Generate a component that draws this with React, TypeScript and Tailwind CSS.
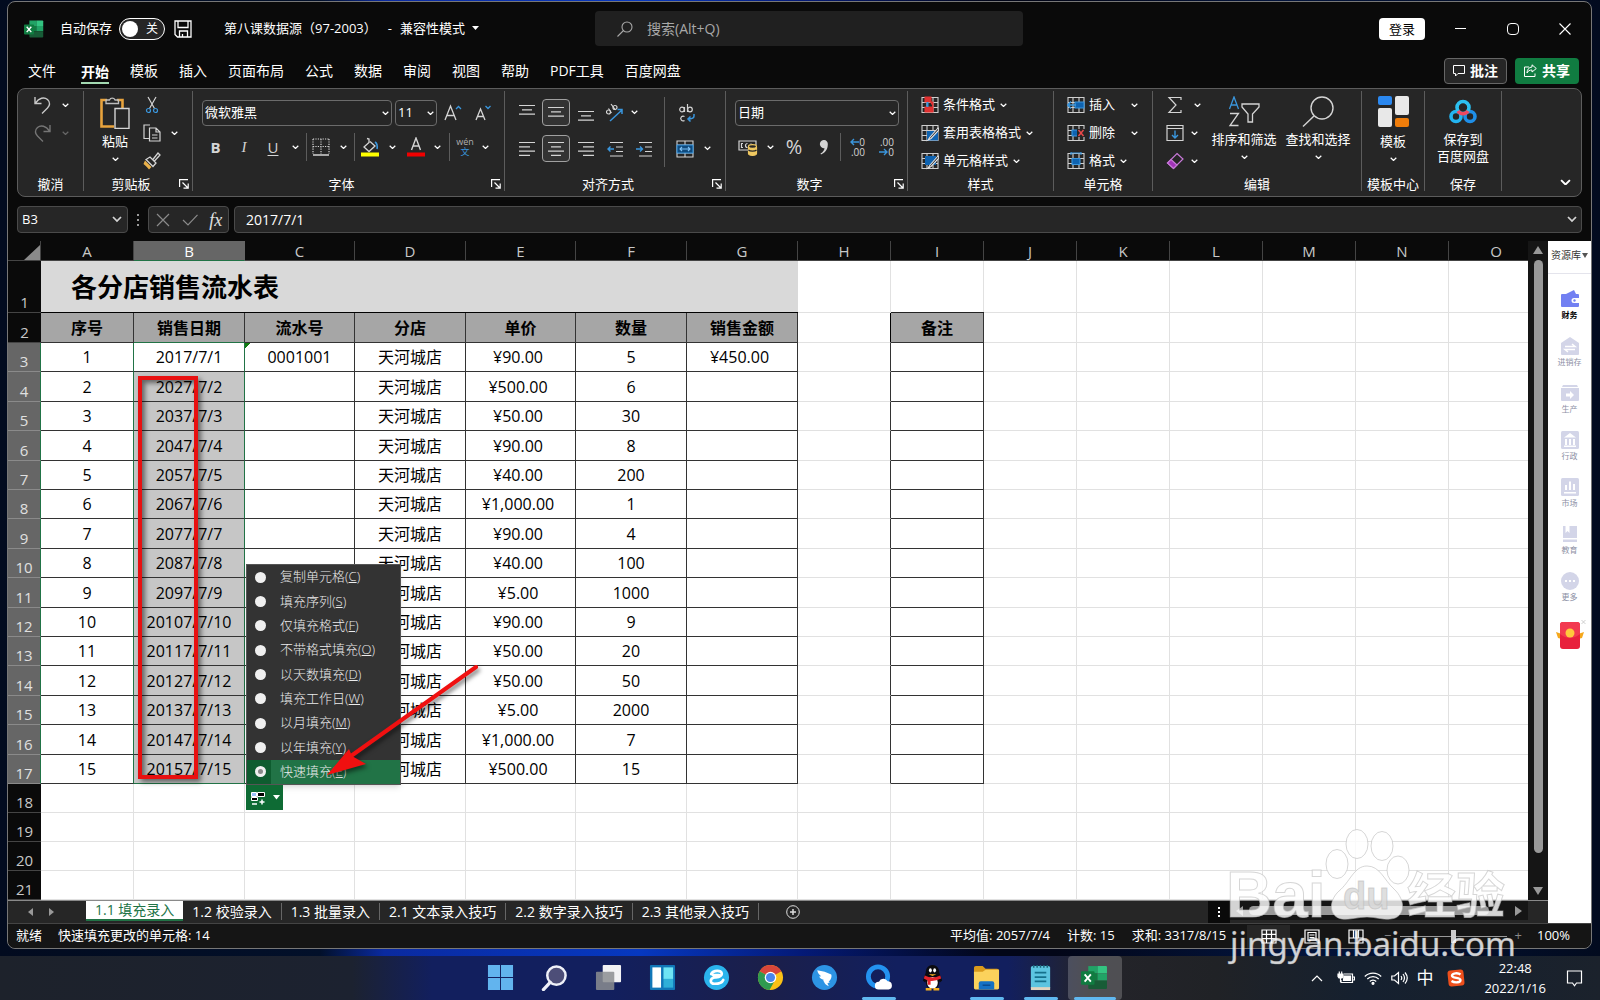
import type { ReactNode } from 'react';

const columns = ['A', 'B', 'C', 'D', 'E', 'F', 'G', 'H', 'I', 'J', 'K', 'L', 'M', 'N', 'O'];
const columnWidths = [
  'w-[93px]', 'w-[111px]', 'w-[110px]', 'w-[111px]', 'w-[110px]', 'w-[111px]', 'w-[111px]',
  'w-[93px]', 'w-[93px]', 'w-[93px]', 'w-[93px]', 'w-[93px]', 'w-[93px]', 'w-[93px]', '',
];
const rowHeights = ['h-[29px]', 'h-[30px]', 'h-[29px]', 'h-[30px]', 'h-[29px]'];

const sales = [
  ['1', '2017/7/1', '¥90.00', '5'],
  ['2', '2027/7/2', '¥500.00', '6'],
  ['3', '2037/7/3', '¥50.00', '30'],
  ['4', '2047/7/4', '¥90.00', '8'],
  ['5', '2057/7/5', '¥40.00', '200'],
  ['6', '2067/7/6', '¥1,000.00', '1'],
  ['7', '2077/7/7', '¥90.00', '4'],
  ['8', '2087/7/8', '¥40.00', '100'],
  ['9', '2097/7/9', '¥5.00', '1000'],
  ['10', '20107/7/10', '¥90.00', '9'],
  ['11', '20117/7/11', '¥50.00', '20'],
  ['12', '20127/7/12', '¥50.00', '50'],
  ['13', '20137/7/13', '¥5.00', '2000'],
  ['14', '20147/7/14', '¥1,000.00', '7'],
  ['15', '20157/7/15', '¥500.00', '15'],
];

const menuTabs = ['模板', '插入', '页面布局', '公式', '数据', '审阅', '视图', '帮助', 'PDF工具', '百度网盘'];
const sheetTabs = ['1.2 校验录入', '1.3 批量录入', '2.1 文本录入技巧', '2.2 数字录入技巧', '2.3 其他录入技巧'];

const fillOptions = [
  ['复制单元格', 'C'],
  ['填充序列', 'S'],
  ['仅填充格式', 'F'],
  ['不带格式填充', 'O'],
  ['以天数填充', 'D'],
  ['填充工作日', 'W'],
  ['以月填充', 'M'],
  ['以年填充', 'Y'],
  ['快速填充', 'E'],
];

/* ---------- shared bits ---------- */

const Chevron = ({ className = 'w-[7px] text-white' }: { className?: string }) => (
  <svg viewBox="0 0 8 5" className={`${className} shrink-0`} fill="none" stroke="currentColor" strokeWidth="1.4">
    <path d="M.8.8 4 4 7.200.8" />
  </svg>
);

const IconButton = ({ label, className, children }: { label: string; className: string; children: ReactNode }) => (
  <button type="button" aria-label={label} className={`${className} flex shrink-0 items-center justify-center`}>
    {children}
  </button>
);

const Divider = ({ className = 'h-7' }: { className?: string }) => (
  <span className={`${className} w-px shrink-0 bg-[#5c5c5c]`} />
);

const Lines = ({ rows }: { rows: [number, number][] }) => (
  <svg viewBox="0 0 16 16" className="h-4 w-4" stroke="#d4d4d4" strokeWidth="1.2">
    {rows.map(([from, to], i) => (
      <path key={i} d={`M${from} ${1.500 + i * 4.300}H${to}`} />
    ))}
  </svg>
);

const Group = ({ title, width, launcher, children }: { title: string; width: string; launcher?: boolean; children: ReactNode }) => (
  <section className={`${width} mt-[2px] mb-[5px] flex shrink-0 flex-col border-r border-[#5c5c5c]`}>
    <div className="flex min-h-0 flex-1">{children}</div>
    <div className="flex h-[14px] items-center">
      <h2 className="flex-1 text-center text-[13px] leading-[14px] whitespace-nowrap">{title}</h2>
      {launcher && (
        <IconButton label={`${title}设置`} className="mr-[2px] h-3 w-3">
          <svg viewBox="0 0 10 10" className="h-[10px] w-[10px]" fill="none" stroke="#fff" strokeWidth="1.2">
            <path d="M.6 8V.6H9M3.500 3.500 9 9M9.200 4.500v4.700H4.500" />
          </svg>
        </IconButton>
      )}
    </div>
  </section>
);

const ExcelIcon = ({ className }: { className: string }) => (
  <svg viewBox="0 0 26 26" className={className}>
    <path d="M7 2h9v7H7z" fill="#21a366" />
    <path d="M16 2h8a1 1 0 0 1 1 1v6h-9z" fill="#33c481" />
    <path d="M7 9h9v7H7z" fill="#107c41" />
    <path d="M16 9h9v7h-9z" fill="#21a366" />
    <path d="M7 16h18v7a1 1 0 0 1-1 1H8a1 1 0 0 1-1-1z" fill="#185c37" />
    <rect x="0" y="7" width="13" height="13" rx="1" fill="#107c41" />
    <path d="m3.500 10 6 7M9.500 10l-6 7" stroke="#fff" strokeWidth="1.800" />
  </svg>
);

/* ---------- title bar and tabs ---------- */

const TitleBar = () => (
  <header className="flex h-[53px] shrink-0 items-center text-[13px] text-white">
    <div className="flex w-[587px] items-center">
      <ExcelIcon className="ml-[16px] h-5 w-5" />
      <span className="ml-[16px]">自动保存</span>
      <button
        type="button"
        role="switch"
        aria-checked="false"
        aria-label="自动保存"
        className="ml-[7px] flex h-[22px] w-[46px] items-center justify-between rounded-full border border-white bg-[#262626] pr-[6px] pl-[2px] text-[12px]"
      >
        <span className="h-4 w-4 rounded-full bg-white" />关
      </button>
      <IconButton label="保存" className="ml-2 h-5 w-5">
        <svg viewBox="0 0 18 18" className="h-[18px] w-[18px]" fill="none" stroke="#fff" strokeWidth="1.300">
          <path d="M1 1h16v16H3.500L1 14.500zM4 1v6.500h10V1M5.500 17v-6h8v6M8.500 17v-3" />
        </svg>
      </IconButton>
      <h1 className="ml-[31px] whitespace-pre">第八课数据源（97-2003）</h1>
      <span className="ml-[11px]">-</span>
      <button type="button" className="ml-2 flex items-center gap-[7px]">
        兼容性模式
        <svg viewBox="0 0 8 5" className="w-[7px]" fill="#fff"><path d="M0 0h8L4 4.500z" /></svg>
      </button>
    </div>
    <label className="flex h-[35px] w-[428px] items-center gap-[14px] rounded bg-[#202020] pl-[22px] text-[14px]">
      <svg viewBox="0 0 16 16" className="h-4 w-4" fill="none" stroke="#a8a8a8" strokeWidth="1.100">
        <circle cx="10" cy="6" r="5" /><path d="m6.500 9.500-6 6" />
      </svg>
      <input type="text" aria-label="搜索" placeholder="搜索(Alt+Q)" className="flex-1 bg-transparent outline-none placeholder:text-[#a8a8a8]" />
    </label>
    <div className="flex flex-1 items-center justify-end">
      <button type="button" className="mr-[27px] h-[22px] w-[46px] rounded-sm bg-white text-[13px] leading-[22px] text-black">登录</button>
      <IconButton label="最小化" className="mr-[37px] h-4 w-4">
        <span className="h-px w-[11px] bg-white" />
      </IconButton>
      <IconButton label="最大化" className="mr-[36px] h-4 w-4">
        <span className="h-3 w-3 rounded-sm border border-white" />
      </IconButton>
      <IconButton label="关闭" className="mr-[18px] h-4 w-4">
        <svg viewBox="0 0 12 12" className="h-3 w-3" stroke="#fff" strokeWidth="1.100"><path d="m.5.5 11 11M11.500.5l-11 11" /></svg>
      </IconButton>
    </div>
  </header>
);

const MenuBar = () => (
  <nav className="flex h-[33px] shrink-0 items-center pb-[2px] text-[14px] text-white">
    <button type="button" className="mr-[25px] ml-5">文件</button>
    <button type="button" className="mt-[4px] mr-[21px] border-b-2 border-[#a3d9b1] font-bold">开始</button>
    <div className="flex gap-[21px]">
      {menuTabs.map((tab) => (
        <button type="button" key={tab} className="whitespace-nowrap">{tab}</button>
      ))}
    </div>
    <div className="flex flex-1 justify-end gap-[8px] pr-[12px] font-bold">
      <button type="button" className="flex h-[26px] w-[63px] items-center justify-center gap-[5px] rounded border border-[#666] bg-[#262626]">
        <svg viewBox="0 0 12 12" className="h-3 w-3" fill="none" stroke="#fff"><path d="M.5.5h11v8H5l-2.500 2.500V8.500h-2z" /></svg>
        批注
      </button>
      <button type="button" className="flex h-[26px] w-[64px] items-center justify-center gap-[5px] rounded bg-[#107c41]">
        <svg viewBox="0 0 13 13" className="h-[13px] w-[13px]" fill="none" stroke="#fff">
          <path d="M5 3H.5v9.500H11V9.500M8 .8 12.300 4.500 8 8V6C5.500 6 4 7 3 9c0-3.500 2-5.800 5-6z" />
        </svg>
        共享
      </button>
    </div>
  </nav>
);

/* ---------- ribbon ---------- */

const ClipboardGroup = () => (
  <Group title="剪贴板" width="w-[109px]" launcher>
    <button type="button" className="ml-[12px] flex w-[38px] flex-col items-center pt-[5px] text-[13px] leading-4">
      <svg viewBox="0 0 30 33" className="h-[33px] w-[30px] shrink-0" fill="none">
        <path d="M7 4H1.500v26.500H14M17 4h5.500v8" stroke="#e8a33d" strokeWidth="2.600" />
        <path d="M6 7.500V4h3.500a3 3 0 0 1 5.500 0h3.500v3.500z" stroke="#bdbdbd" strokeWidth="1.300" />
        <path d="M15 12.500h14v20H15z" stroke="#d4d4d4" strokeWidth="1.400" fill="#262626" />
      </svg>
      <span className="mt-[4px] mb-[8px]">粘贴</span>
      <Chevron />
    </button>
    <div className="ml-[9px] flex flex-col">
      <IconButton label="剪切" className="h-[28px] w-[18px]">
        <svg viewBox="0 0 14 18" className="h-[18px] w-[14px]" fill="none" strokeWidth="1.200">
          <path d="m3 1 6.500 11.500M11 1 4.500 12.500" stroke="#d4d4d4" />
          <circle cx="3.500" cy="14.500" r="2" stroke="#3a96dd" /><circle cx="10.500" cy="14.500" r="2" stroke="#3a96dd" />
        </svg>
      </IconButton>
      <button type="button" aria-label="复制" className="flex h-[28px] items-center gap-[10px]">
        <svg viewBox="0 0 18 18" className="h-[18px] w-[18px]" fill="none" stroke="#d4d4d4" strokeWidth="1.200">
          <path d="M6 14.500H1V1h6M6.500 4h6.500l4 4v9H6.500zM13 4v4h4M9 11h5.500M9 14h5.500" />
        </svg>
        <Chevron />
      </button>
      <IconButton label="格式刷" className="h-[28px] w-[18px]">
        <svg viewBox="0 0 18 18" className="h-[18px] w-[18px]" fill="none">
          <path d="M2 8.500 8.500 15 6 17.500C4 15 2 13 .5 12z" fill="#e8b04a" />
          <path d="m3 7.500 7 7 3-3.500-6-6zM9.500 8 15 1l2 2-6 6.500" stroke="#d4d4d4" strokeWidth="1.300" />
        </svg>
      </IconButton>
    </div>
  </Group>
);

const FontGroup = () => (
  <Group title="字体" width="w-[312px]" launcher>
    <div className="flex flex-col pl-[9px]">
      <div className="mt-[9px] flex items-center">
        <div className="grid items-center">
          <select aria-label="字体" className="col-start-1 row-start-1 h-[26px] w-[190px] appearance-none rounded border border-[#6b6b6b] bg-[#262626] pl-[2px] text-[13px]">
            <option>微软雅黑</option>
          </select>
          <Chevron className="pointer-events-none col-start-1 row-start-1 mr-[3px] w-[7px] justify-self-end" />
        </div>
        <div className="ml-[3px] grid items-center">
          <select aria-label="字号" className="col-start-1 row-start-1 h-[26px] w-[42px] appearance-none rounded border border-[#6b6b6b] bg-[#262626] pl-[2px] text-[13px]">
            <option>11</option>
          </select>
          <Chevron className="pointer-events-none col-start-1 row-start-1 mr-[3px] w-[7px] justify-self-end" />
        </div>
        <IconButton label="增大字号" className="h-6 w-[31px]">
          <svg viewBox="0 0 18 18" className="h-[18px] w-[18px]" fill="none" strokeWidth="1.300">
            <path d="M1 16 6.500 2 12 16M3 11.500h7" stroke="#d4d4d4" /><path d="m12 5 2.500-2.500L17 5" stroke="#3a96dd" />
          </svg>
        </IconButton>
        <IconButton label="减小字号" className="h-6 w-[29px]">
          <svg viewBox="0 0 18 18" className="h-[18px] w-[18px]" fill="none" strokeWidth="1.300">
            <path d="M2 16 6.500 5 11 16M3.500 12.500h6" stroke="#d4d4d4" /><path d="M11.500 2 14 4.500 16.500 2" stroke="#3a96dd" />
          </svg>
        </IconButton>
      </div>
      <div className="mt-[6px] flex h-[30px] items-center text-[15px] text-[#d4d4d4]">
        <button type="button" className="w-[27px] font-bold">B</button>
        <button type="button" className="w-[30px] font-['Liberation_Serif',serif] italic">I</button>
        <button type="button" className="w-[28px] underline underline-offset-2">U</button>
        <IconButton label="下划线样式" className="h-5 w-4"><Chevron /></IconButton>
        <Divider className="mx-[3px] h-7" />
        <IconButton label="边框" className="h-5 w-[22px]">
          <svg viewBox="0 0 18 18" className="h-[18px] w-[18px]" stroke="#d4d4d4" strokeWidth="1.200">
            <path d="M1 1h16M1 1v15M17 1v15M9 1v15M1 8.500h16" strokeDasharray="1.200 1.200" /><path d="M1 17h16" strokeWidth="1.600" />
          </svg>
        </IconButton>
        <IconButton label="边框样式" className="h-5 w-[22px]"><Chevron /></IconButton>
        <Divider />
        <IconButton label="填充颜色" className="ml-[5px] h-6 w-[20px]">
          <svg viewBox="0 0 20 20" className="h-5 w-5" fill="none" strokeWidth="1.300">
            <path d="M9 2.500v3L4 10l5 4.500 6-5.500-5-4.500M9 5V2l-2-.5" stroke="#d4d4d4" />
            <path d="M15 5q3 2 2 7" stroke="#3a96dd" strokeWidth="1.600" />
            <path d="M1 15.500h18v4H1z" fill="#ffff00" />
          </svg>
        </IconButton>
        <IconButton label="填充颜色选项" className="h-5 w-[24px]"><Chevron /></IconButton>
        <IconButton label="字体颜色" className="h-6 w-[23px]">
          <svg viewBox="0 0 20 20" className="h-5 w-5" fill="none" strokeWidth="1.400">
            <path d="m5.500 13 4.500-12 4.500 12M7 9h6" stroke="#d4d4d4" /><path d="M1 15.500h18v4H1z" fill="#f00000" />
          </svg>
        </IconButton>
        <IconButton label="字体颜色选项" className="h-5 w-[20px]"><Chevron /></IconButton>
        <Divider className="ml-[2px] h-7" />
        <button type="button" className="ml-[5px] flex w-[20px] flex-col items-center text-[9px] leading-[10px] text-[#b0b0b0]">
          wén<span className="text-[#3a96dd]">文</span>
        </button>
        <IconButton label="拼音选项" className="h-5 w-[20px]"><Chevron /></IconButton>
      </div>
    </div>
  </Group>
);

const AlignGroup = () => (
  <Group title="对齐方式" width="w-[221px]" launcher>
    <div className="flex flex-col pt-[8px] pl-[8px]">
      <div className="flex h-[27px] items-center">
        <IconButton label="顶端对齐" className="h-7 w-[28px] pb-[2px]"><Lines rows={[[0, 16], [3, 13], [0, 16]]} /></IconButton>
        <IconButton label="垂直居中" className="mr-[1px] ml-[1px] h-[27px] w-[28px] rounded border border-[#a0a0a0] bg-[#333] pt-[2px]"><Lines rows={[[0, 16], [3, 13], [0, 16]]} /></IconButton>
        <IconButton label="底端对齐" className="h-7 w-[30px] pt-[10px]"><Lines rows={[[0, 16], [3, 13], [0, 16]]} /></IconButton>
        <IconButton label="方向" className="h-6 w-[26px]">
          <svg viewBox="0 0 20 20" className="h-5 w-5" fill="none" stroke="#d4d4d4" strokeWidth="1.200">
            <circle cx="4.500" cy="9" r="2" /><path d="M4.500 5.500 7.500 10M7 1l4.500 6" /><circle cx="11" cy="4.500" r="2" />
            <path d="M6 18 18 7M18 11V6.500h-4.500" stroke="#3a96dd" strokeWidth="1.500" />
          </svg>
        </IconButton>
        <IconButton label="方向选项" className="h-5 w-[14px]"><Chevron /></IconButton>
      </div>
      <div className="mt-[9px] flex h-[27px] items-center">
        <IconButton label="左对齐" className="h-7 w-[28px]"><Lines rows={[[0, 16], [0, 11], [0, 16], [0, 11]]} /></IconButton>
        <IconButton label="居中" className="mr-[1px] ml-[1px] h-[27px] w-[28px] rounded border border-[#a0a0a0] bg-[#333]"><Lines rows={[[0, 16], [3, 13], [0, 16], [3, 13]]} /></IconButton>
        <IconButton label="右对齐" className="h-7 w-[30px]"><Lines rows={[[0, 16], [5, 16], [0, 16], [5, 16]]} /></IconButton>
        <IconButton label="减少缩进量" className="h-7 w-[28px]">
          <svg viewBox="0 0 16 16" className="h-4 w-4" fill="none" stroke="#d4d4d4" strokeWidth="1.200">
            <path d="M3 1.500h13M9 6h7M9 10.500h7M3 15h13" /><path d="M7 8H1M3.500 5.500 1 8l2.500 2.500" stroke="#3a96dd" strokeWidth="1.400" />
          </svg>
        </IconButton>
        <IconButton label="增加缩进量" className="h-7 w-[30px]">
          <svg viewBox="0 0 16 16" className="h-4 w-4" fill="none" stroke="#d4d4d4" strokeWidth="1.200">
            <path d="M3 1.500h13M9 6h7M9 10.500h7M3 15h13" /><path d="M0 8h6.500M4 5.500 6.500 8 4 10.500" stroke="#3a96dd" strokeWidth="1.400" />
          </svg>
        </IconButton>
      </div>
    </div>
    <Divider className="mt-[6px] ml-[5px] h-[70px]" />
    <div className="flex flex-col pt-[8px] pl-[9px]">
      <IconButton label="自动换行" className="ml-[2px] h-[27px] w-[22px]">
        <svg viewBox="0 0 18 20" className="h-5 w-[18px]" fill="none" stroke="#d4d4d4" strokeWidth="1.200">
          <circle cx="4" cy="6.500" r="2.300" /><path d="M6.500 4v5M9.500 1v8" /><circle cx="12" cy="6.500" r="2.300" />
          <path d="M6.500 13.500a2.400 2.400 0 1 0 0 4" /><path d="M16 11v2q0 3-6 3M12.500 13.500 10 16l2.500 2.500" stroke="#3a96dd" strokeWidth="1.500" />
        </svg>
      </IconButton>
      <div className="mt-[9px] flex h-[27px] items-center">
        <IconButton label="合并后居中" className="h-6 w-[22px]">
          <svg viewBox="0 0 18 18" className="h-[18px] w-[18px]" fill="none" stroke="#d4d4d4" strokeWidth="1.100">
            <path d="M1 1h16v16H1zM1 5h16M1 13h16M9 1v4M9 13v4" /><path d="M1 5h16v8H1z" fill="#0f4a7d" stroke="#3a96dd" />
            <path d="M4 9h10M6 7 4 9l2 2M12 7l2 2-2 2" stroke="#7cc0f5" />
          </svg>
        </IconButton>
        <IconButton label="合并选项" className="h-5 w-[22px]"><Chevron /></IconButton>
      </div>
    </div>
  </Group>
);

const NumberGroup = () => (
  <Group title="数字" width="w-[182px]" launcher>
    <div className="flex flex-col pl-[9px]">
      <div className="mt-[9px] grid items-center">
        <select aria-label="数字格式" className="col-start-1 row-start-1 h-[26px] w-[164px] appearance-none rounded border border-[#6b6b6b] bg-[#262626] pl-[2px] text-[13px]">
          <option>日期</option>
        </select>
        <Chevron className="pointer-events-none col-start-1 row-start-1 mr-[3px] w-[7px] justify-self-end" />
      </div>
      <div className="mt-[6px] flex h-[30px] items-center text-[#d4d4d4]">
        <IconButton label="会计数字格式" className="ml-[3px] h-6 w-[20px]">
          <svg viewBox="0 0 20 18" className="h-[18px] w-5" fill="none" stroke="#d4d4d4" strokeWidth="1.200">
            <path d="M10 12H1V3h17v4M5 5.500H3.500v4H5M9.500 5.500A2 2 0 0 0 9.500 9.500M13 5.500v1" />
            <path d="M10.500 9v6.500c0 2.500 8 2.500 8 0V9" fill="#f0c860" stroke="#f0c860" /><ellipse cx="14.500" cy="8.500" rx="4" ry="1.800" fill="#262626" stroke="#f0c860" />
            <path d="M10.500 12c1.500 1.500 6.500 1.500 8 0" stroke="#262626" />
          </svg>
        </IconButton>
        <IconButton label="会计格式选项" className="h-5 w-[24px]"><Chevron /></IconButton>
        <button type="button" className="w-[24px] text-center text-[20px]">%</button>
        <IconButton label="千位分隔样式" className="h-6 w-[34px]">
          <svg viewBox="0 0 9 15" className="h-[15px] w-[9px]" fill="#d4d4d4"><path d="M4.500 0A4 4 0 0 1 8.800 4.500C8.800 9.500 6 13 2 14.500l-.5-1C4 12 5.300 10.300 5.500 8.200A4 4 0 1 1 4.500 0z" /></svg>
        </IconButton>
        <Divider />
        <button type="button" aria-label="增加小数位数" className="ml-[4px] flex w-[20px] flex-col items-end text-[10px] leading-[10px]">
          <span className="flex items-center"><svg viewBox="0 0 9 8" className="w-[9px]" fill="none" stroke="#3a96dd" strokeWidth="1.400"><path d="M9 4H1M4 1 1 4l3 3" /></svg>0</span>
          <span>.00</span>
        </button>
        <button type="button" aria-label="减少小数位数" className="ml-[9px] flex w-[20px] flex-col items-end text-[10px] leading-[10px]">
          <span>.00</span>
          <span className="flex items-center"><svg viewBox="0 0 9 8" className="w-[9px]" fill="none" stroke="#3a96dd" strokeWidth="1.400"><path d="M0 4h8M5 1l3 3-3 3" /></svg>0</span>
        </button>
      </div>
    </div>
  </Group>
);

const TableGlyph = ({ children }: { children?: ReactNode }) => (
  <svg viewBox="0 0 18 18" className="h-[18px] w-[18px] shrink-0" fill="none" stroke="#cfcfcf" strokeWidth="1.100">
    <path d="M1 1.500h16v15H1zM1 6.500h16M1 11.500h16M6 1.500v15M12 1.500v15" />
    {children}
  </svg>
);

const RowButton = ({ icon, label, chevron = 'ml-[5px]' }: { icon: ReactNode; label: string; chevron?: string }) => (
  <button type="button" className="flex h-[28px] items-center text-[13px] whitespace-nowrap">
    {icon}
    <span className="ml-1">{label}</span>
    <span className={chevron}><Chevron /></span>
  </button>
);

const StylesGroup = () => (
  <Group title="样式" width="w-[146px]">
    <div className="flex flex-col pl-[13px]">
      <RowButton label="条件格式" icon={<TableGlyph><path d="M4 1h6v5H4zM9 6h3v5H4v5h8v-5" fill="#e03131" stroke="#e03131" /><path d="M6.500 6v5" stroke="#3a96dd" strokeWidth="2" /></TableGlyph>} />
      <RowButton label="套用表格格式" icon={<TableGlyph><path d="M6 7h11v9.500H6z" fill="#0f63b0" stroke="none" /><path d="M17 4 9 13l-2 3 3-1.500L18 6z" fill="#262626" stroke="#e4e4e4" /></TableGlyph>} />
      <RowButton label="单元格样式" icon={<TableGlyph><path d="M4 4h11v9H4z" fill="#0f63b0" stroke="none" /><path d="M17 4 9 13l-2 3 3-1.500L18 6z" fill="#262626" stroke="#e4e4e4" /></TableGlyph>} />
    </div>
  </Group>
);

const CellsGroup = () => (
  <Group title="单元格" width="w-[99px]">
    <div className="flex flex-col pl-[13px]">
      <RowButton label="插入" chevron="ml-[16px]" icon={<TableGlyph><path d="M8 6h9v6H8z" fill="#0f63b0" stroke="#3a96dd" /><path d="M9 9H1M4 5.500.8 9 4 12.500" stroke="#3a96dd" strokeWidth="1.500" /></TableGlyph>} />
      <RowButton label="删除" chevron="ml-[16px]" icon={<TableGlyph><path d="M5 6h6v6H5z" fill="#0f63b0" stroke="#3a96dd" /><path d="M10 5h8v8h-8z" fill="#262626" stroke="none" /><path d="m11.500 6 5 6M16.500 6l-5 6" stroke="#e8484a" strokeWidth="1.500" /></TableGlyph>} />
      <RowButton label="格式" icon={<TableGlyph><path d="M5 6.500h8v6H5z" fill="#0f63b0" stroke="#3a96dd" /><path d="M4 1h10M4-1v4M14-1v4" stroke="#3a96dd" /></TableGlyph>} />
    </div>
  </Group>
);

const EditingGroup = () => (
  <Group title="编辑" width="w-[209px]">
    <div className="flex w-[53px] flex-col pl-[13px]">
      <button type="button" aria-label="自动求和" className="flex h-[28px] items-center gap-[10px]">
        <svg viewBox="0 0 18 18" className="h-[18px] w-[18px]" fill="none" stroke="#d4d4d4" strokeWidth="1.200"><path d="M15 4V1.500H3L10 9l-7 7.500h12V14" /></svg>
        <Chevron />
      </button>
      <button type="button" aria-label="填充" className="flex h-[28px] items-center gap-[7px]">
        <svg viewBox="0 0 18 18" className="h-[18px] w-[18px]" fill="none" stroke="#d4d4d4" strokeWidth="1.200">
          <path d="M1 1.500h16v15H1zM1 4.500h16" /><path d="M9 6.500V14M6 11l3 3 3-3" stroke="#3a96dd" strokeWidth="1.400" />
        </svg>
        <Chevron />
      </button>
      <button type="button" aria-label="清除" className="flex h-[28px] items-center gap-[7px]">
        <svg viewBox="0 0 18 18" className="h-[18px] w-[18px]" fill="none" stroke="#c678d6" strokeWidth="1.200">
          <path d="M11 1.500 17 7l-9.500 9.500L1.500 11z" /><path d="m5 7.500 6 5.500-3.500 3.500-6-5.500z" fill="#a034b8" />
        </svg>
        <Chevron />
      </button>
    </div>
    <button type="button" className="ml-[1px] flex w-[74px] flex-col items-center pt-[5px] text-[13px] leading-4 whitespace-nowrap">
      <svg viewBox="0 0 32 31" className="h-[31px] w-8 shrink-0" fill="none" strokeWidth="1.300">
        <path d="M1.500 13 6 1l4.500 12M3 9h6" stroke="#3a96dd" />
        <path d="M2 17.500h8.500L2 29.500h8.500M14 8h17v3l-6.500 7v8H20v-8l-6-7z" stroke="#d4d4d4" />
      </svg>
      <span className="mt-[4px] mb-[8px]">排序和筛选</span>
      <Chevron />
    </button>
    <button type="button" className="flex w-[74px] flex-col items-center pt-[5px] text-[13px] leading-4 whitespace-nowrap">
      <svg viewBox="0 0 32 31" className="h-[31px] w-8 shrink-0" fill="none" stroke="#d4d4d4" strokeWidth="1.400">
        <circle cx="20" cy="12" r="11" /><path d="M12 20 1 30.500" />
      </svg>
      <span className="mt-[4px] mb-[8px]">查找和选择</span>
      <Chevron />
    </button>
  </Group>
);

const Ribbon = () => (
  <div className="mx-[9px] flex h-[109px] shrink-0 rounded-lg border border-[#5c5c5c] bg-[#262626] text-white">
    <Group title="撤消" width="w-[66px]">
      <div className="flex flex-1 flex-col pl-[16px]">
        <button type="button" aria-label="撤消" className="flex h-[28px] items-center gap-[11px]">
          <svg viewBox="0 0 17 18" className="h-[18px] w-[17px]" fill="none" stroke="#c8c8c8" strokeWidth="1.400"><path d="M1 1v6.500h6.500M1.500 7C5 2 10 .5 13.500 3.500c3 2.800 2.500 6 0 8.500L8 17.500" /></svg>
          <Chevron />
        </button>
        <button type="button" aria-label="恢复" className="flex h-[28px] items-center gap-[11px]">
          <svg viewBox="0 0 17 18" className="h-[18px] w-[17px]" fill="none" stroke="#757575" strokeWidth="1.400"><path d="M16 1v6.500H9.500M15.500 7C12 2 7 .5 3.500 3.500c-3 2.800-2.500 6 0 8.500L9 17.500" /></svg>
          <Chevron className="w-[7px] text-[#666]" />
        </button>
      </div>
    </Group>
    <ClipboardGroup />
    <FontGroup />
    <AlignGroup />
    <NumberGroup />
    <StylesGroup />
    <CellsGroup />
    <EditingGroup />
    <Group title="模板中心" width="w-[63px]">
      <button type="button" className="flex flex-1 flex-col items-center pt-[5px] text-[13px] leading-4">
        <svg viewBox="0 0 31 31" className="h-[31px] w-[31px] shrink-0">
          <rect x="0" y="0" width="14" height="9" rx="2" fill="#2b88f0" /><rect x="17" y="0" width="14" height="19" rx="2" fill="#e8e8e8" />
          <rect x="0" y="12" width="14" height="19" rx="2" fill="#e8e8e8" /><rect x="17" y="22" width="14" height="9" rx="2" fill="#f07d0a" />
        </svg>
        <span className="mt-[6px] mb-[8px]">模板</span>
        <Chevron />
      </button>
    </Group>
    <Group title="保存" width="w-[77px]">
      <button type="button" className="flex flex-1 flex-col items-center pt-[8px] text-[13px] leading-[17px]">
        <svg viewBox="0 0 28 25" className="h-[25px] w-7 shrink-0" fill="none" strokeWidth="3.600">
          <circle cx="7" cy="17.500" r="5" stroke="#23b4f0" /><circle cx="21" cy="17.500" r="5" stroke="#1f8fe8" />
          <circle cx="14" cy="8.500" r="6" stroke="#2cc0f0" /><path d="M9 12a6 6 0 0 0 10 0" stroke="#f04860" />
        </svg>
        <span className="mt-[7px]">保存到<br />百度网盘</span>
      </button>
    </Group>
    <div className="flex flex-1 items-end justify-end pr-[10px] pb-[8px]">
      <IconButton label="折叠功能区" className="h-3 w-3"><Chevron className="w-[11px] text-white" /></IconButton>
    </div>
  </div>
);

const FormulaBar = () => (
  <div className="mx-[9px] mt-[9px] mb-[8px] flex h-[27px] shrink-0 items-center text-[13px] text-white">
    <label className="flex h-full w-[111px] items-center rounded border border-[#4a4a4a] bg-[#262626] pr-[5px] pl-[4px]">
      <input type="text" aria-label="名称框" defaultValue="B3" className="w-0 flex-1 bg-transparent outline-none" />
      <Chevron className="w-[10px] text-[#d4d4d4]" />
    </label>
    <span className="mx-[9px] flex flex-col gap-[3px]">
      <i className="h-[2px] w-[2px] bg-[#999]" /><i className="h-[2px] w-[2px] bg-[#999]" /><i className="h-[2px] w-[2px] bg-[#999]" />
    </span>
    <div className="mr-[5px] flex h-full w-[81px] items-center justify-around rounded border border-[#4a4a4a] bg-[#262626]">
      <IconButton label="取消" className="h-4 w-4">
        <svg viewBox="0 0 14 14" className="h-[14px] w-[14px]" stroke="#8a8a8a" strokeWidth="1.200"><path d="m1 1 12 12M13 1 1 13" /></svg>
      </IconButton>
      <IconButton label="输入" className="h-4 w-4">
        <svg viewBox="0 0 16 12" className="h-3 w-4" fill="none" stroke="#8a8a8a" strokeWidth="1.200"><path d="m1 6 5 5L15.500.8" /></svg>
      </IconButton>
      <button type="button" className="font-['Liberation_Serif',serif] text-[18px] leading-5 text-[#e0e0e0] italic">fx</button>
    </div>
    <label className="flex h-full flex-1 items-center rounded border border-[#4a4a4a] bg-[#262626] pr-[4px] pl-[11px]">
      <input type="text" aria-label="编辑栏" defaultValue="2017/7/1" className="flex-1 bg-transparent text-[14px] outline-none" />
      <Chevron className="w-[10px] text-[#d4d4d4]" />
    </label>
  </div>
);

/* ---------- sheet ---------- */

const bodyCell = 'border-r border-b border-[#333] p-0 text-center text-[16px] leading-5';
const blankCell = 'border-r border-b border-[#e1e1e1] p-0';
const rowHead = 'border-b p-0 text-center align-bottom text-[15px] leading-5 font-normal';

const Blank = ({ count }: { count: number }) => (
  <>
    {Array.from({ length: count }, (_, i) => (
      <td key={i} className={blankCell} />
    ))}
  </>
);

const SheetTable = () => (
  <table className="w-full table-fixed border-separate border-spacing-0 bg-white text-black">
    <colgroup>
      <col className="w-[33px]" />
      {columnWidths.map((width, i) => (
        <col key={i} className={width} />
      ))}
    </colgroup>
    <thead>
      <tr className="h-[20px] bg-[#0a0a0a] text-[#c8c8c8]">
        <td className="border-r border-b border-[#444] p-0">
          <svg viewBox="0 0 16 15" className="mt-[3px] ml-auto h-[15px] w-4" fill="#8a8a8a"><path d="M16 0v15H0z" /></svg>
        </td>
        {columns.map((name) => (
          <th
            key={name}
            scope="col"
            className={`border-r border-b p-0 text-[15px] leading-[18px] font-normal ${name === 'B' ? 'border-r-[#666] border-b-[#217346] bg-[#666] text-white' : 'border-[#444]'}`}
          >
            {name}
          </th>
        ))}
      </tr>
    </thead>
    <tbody>
      <tr className="h-[52px]">
        <th scope="row" className={`${rowHead} border-[#444] bg-[#0a0a0a] text-[#c8c8c8]`}>1</th>
        <td colSpan={7} className="border-b border-b-black bg-[#d9d9d9] p-0 pl-[30px] text-[26px] leading-8 font-bold">各分店销售流水表</td>
        <Blank count={8} />
      </tr>
      <tr className="h-[30px]">
        <th scope="row" className={`${rowHead} border-[#444] bg-[#0a0a0a] text-[#c8c8c8]`}>2</th>
        {['序号', '销售日期', '流水号', '分店', '单价', '数量', '销售金额'].map((name) => (
          <th key={name} scope="col" className={`${bodyCell} bg-[#a6a6a6] font-bold ${name === '销售日期' ? 'border-b-[#217346]' : ''}`}>{name}</th>
        ))}
        <td className="border-r border-b border-r-black border-b-[#e1e1e1] p-0" />
        <th scope="col" className={`${bodyCell} bg-[#a6a6a6] font-bold shadow-[0_-1px_0_#222]`}>备注</th>
        <Blank count={6} />
      </tr>
      {sales.map(([no, date, price, qty], i) => (
        <tr key={no} className={rowHeights[i % 5]}>
          <th scope="row" className={`${rowHead} border-r border-r-[#217346] border-b-[#8a8a8a] bg-[#666] text-[#e0e0e0]`}>{i + 3}</th>
          <td className={`${bodyCell} border-r-[#217346]`}>{no}</td>
          <td className={`${bodyCell} border-r-[#217346] ${i === 0 ? '' : 'bg-[#c6c6c6]'} ${i === 14 ? 'border-b-[#217346]' : ''}`}>{date}</td>
          <td className={`${bodyCell} ${i === 0 ? 'bg-[linear-gradient(135deg,#107c10_4px,transparent_4px)]' : ''}`}>{i === 0 ? '0001001' : ''}</td>
          <td className={bodyCell}>天河城店</td>
          <td className={`${bodyCell} pr-[5px]`}>{price}</td>
          <td className={bodyCell}>{qty}</td>
          <td className={`${bodyCell} pr-[5px]`}>{i === 0 ? '¥450.00' : ''}</td>
          <td className="border-r border-b border-r-[#333] border-b-[#e1e1e1] p-0" />
          <td className={bodyCell} />
          <Blank count={6} />
        </tr>
      ))}
      {['18', '19', '20', '21', ''].map((n) => (
        <tr key={n} className="h-[29px]">
          <th scope="row" className={`${rowHead} border-[#444] bg-[#0a0a0a] text-[#c8c8c8]`}>{n}</th>
          <Blank count={15} />
        </tr>
      ))}
    </tbody>
  </table>
);

const FillMenu = () => (
  <div className="absolute top-[323px] left-[238px] flex h-[221px] w-[155px] flex-col border border-[#555] bg-[#333] text-[13px] text-[#ececec] shadow-md">
    {fillOptions.map(([name, key]) => (
      <label key={key + name} className={`flex flex-1 items-center ${name === '快速填充' ? 'bg-[#217346]' : ''}`}>
        <span className={`flex h-full w-[24px] items-center justify-end ${name === '快速填充' ? 'bg-[#0e5c2f]' : ''}`}>
          <input
            type="radio"
            name="fill"
            defaultChecked={name === '快速填充'}
            className="mr-[5px] h-[11px] w-[11px] appearance-none rounded-full bg-[#f0f0f0] checked:border-[3px] checked:border-[#f0f0f0] checked:bg-[#888]"
          />
        </span>
        <span className="ml-[9px] font-light whitespace-nowrap">{name}(<u>{key}</u>)</span>
      </label>
    ))}
  </div>
);

const SheetOverlay = () => (
  <>
    <div className="absolute top-[135px] left-[130px] h-[403px] w-[60px] border-4 border-[#e81010] shadow-[3px_3px_5px_rgba(0,0,0,0.5),inset_3px_3px_5px_rgba(0,0,0,0.5)]" />
    <FillMenu />
    <button type="button" aria-label="自动填充选项" className="absolute top-[544px] left-[238px] flex h-[25px] w-[37px] items-center justify-between bg-[#0e6b34] pr-[3px] pl-[5px]">
      <svg viewBox="0 0 14 14" className="h-[14px] w-[14px]" stroke="#fff">
        <path d="M.5 1.500h5v4h-5z" fill="#9cc0f8" /><path d="M6.500 1.500h7v4h-7zM.5 6.500h6v3h-6z" fill="#000" />
        <path d="M1 13h5M11 8.500v5M8.500 11h5" strokeWidth="1.500" />
      </svg>
      <svg viewBox="0 0 8 5" className="w-[7px]" fill="#fff"><path d="M0 0h8L4 5z" /></svg>
    </button>
    <svg viewBox="0 0 160 120" className="absolute top-[421px] left-[313px] h-[120px] w-[160px] drop-shadow-[2px_3px_2px_rgba(0,0,0,0.5)]">
      <path d="M155 5 30 94" stroke="#f01010" strokeWidth="4" strokeLinecap="round" />
      <path d="M6 113 28 87 31 94 45 102z" fill="#f01010" />
    </svg>
  </>
);

const SheetTabs = () => (
  <div className="flex h-[23px] shrink-0 items-start border-t border-[#8a8a8a] bg-[#262626] text-[14px] text-white">
    <div className="flex w-[78px] shrink-0 items-center gap-[16px] self-center pl-[20px]">
      <svg viewBox="0 0 5 8" className="h-2 w-[5px]" fill="#999"><path d="M5 0v8L0 4z" /></svg>
      <svg viewBox="0 0 5 8" className="h-2 w-[5px]" fill="#999"><path d="M0 0v8l5-4z" /></svg>
    </div>
    <button type="button" className="h-[20px] shrink-0 border-b-2 border-[#217346] bg-white px-[9px] leading-[18px] text-[#217346]">1.1 填充录入</button>
    {sheetTabs.map((tab) => (
      <button type="button" key={tab} className="mt-[2px] h-[17px] shrink-0 border-r border-[#666] px-[9px] leading-[14px] whitespace-nowrap">{tab}</button>
    ))}
    <IconButton label="新工作表" className="ml-[27px] h-[22px] w-[14px]">
      <svg viewBox="0 0 14 14" className="h-[14px] w-[14px]" fill="none" stroke="#ddd"><circle cx="7" cy="7" r="6.300" /><path d="M7 4v6M4 7h6" strokeWidth="1.500" /></svg>
    </IconButton>
    <div className="flex h-full flex-1 justify-end">
      <span className="flex h-full w-[22px] flex-col items-center justify-center gap-[2px] bg-[#0a0a0a]">
        <i className="h-[2px] w-[2px] bg-white" /><i className="h-[2px] w-[2px] bg-white" /><i className="h-[2px] w-[2px] bg-white" />
      </span>
      <div className="mr-[20px] flex h-[19px] w-[298px] items-center gap-[6px] bg-[#151515] px-[6px]">
        <svg viewBox="0 0 7 10" className="h-[10px] w-[7px]" fill="#999"><path d="M7 0v10L0 5z" /></svg>
        <span className="h-[9px] w-[240px] rounded-full bg-[#999]" />
        <svg viewBox="0 0 7 10" className="ml-auto h-[10px] w-[7px]" fill="#999"><path d="M0 0v10l7-5z" /></svg>
      </div>
    </div>
  </div>
);

/* ---------- right-hand resource panel ---------- */

const SideItem = ({ label, active, children }: { label: string; active?: boolean; children: ReactNode }) => (
  <button type="button" className={`flex h-[47px] w-full flex-col items-center text-[8px] leading-[10px] ${active ? 'font-bold text-black' : 'text-[#8d90a5]'}`}>
    <svg viewBox="0 0 18 18" className="mb-[2px] h-[18px] w-[18px]" fill={active ? '#7280f2' : '#d3d5e8'}>{children}</svg>
    {label}
  </button>
);

const SidePanel = () => (
  <aside className="flex w-[43px] shrink-0 flex-col items-center bg-white">
    <button type="button" className="mb-[16px] flex h-[33px] w-full items-center justify-center gap-[1px] border-b border-[#e4e4ec] pb-[4px] text-[10px] whitespace-nowrap text-[#333]">
      资源库
      <svg viewBox="0 0 6 5" className="w-[6px]" fill="#555"><path d="M0 0h6L3 5z" /></svg>
    </button>
    <SideItem label="财务" active>
      <path d="M5 4 13 0l2 4zM1 4h16a1 1 0 0 1 1 1v3h-5a2.500 2.500 0 0 0 0 5h5v3a1 1 0 0 1-1 1H1a1 1 0 0 1-1-1V5a1 1 0 0 1 1-1z" /><circle cx="13.500" cy="10.500" r="1.200" />
    </SideItem>
    <SideItem label="进销存">
      <path d="M9 0 18 6v11a1 1 0 0 1-1 1H1a1 1 0 0 1-1-1V6z" /><path d="M4 9.500h10l-3-2.500M14 12.500H4l3 2.500" fill="none" stroke="#fff" strokeWidth="1.500" />
    </SideItem>
    <SideItem label="生产">
      <path d="M2 1h14l1 2H1zM0 4h18v12a1 1 0 0 1-1 1H1a1 1 0 0 1-1-1z" /><path d="M5 9.500h4V7l4 4-4 4v-2.500H5z" fill="#fff" />
    </SideItem>
    <SideItem label="行政">
      <rect width="18" height="18" rx="1.500" /><path d="m9 2 6 4.500H3zM4 8h2v6H4zM8 8h2v6H8zM12 8h2v6h-2zM3 14.500h12V16H3z" fill="#fff" />
    </SideItem>
    <SideItem label="市场">
      <rect width="18" height="18" rx="1.500" /><path d="M4 7h2v5H4zM8 3.500h2V12H8zM12 6h2v6h-2zM3 14h12v1.500H3z" fill="#fff" />
    </SideItem>
    <SideItem label="教育">
      <path d="M2 1h14v12H2zM2 14.500h14V17H2z" /><path d="M4.500 1h4v7l-2-2-2 2z" fill="#fff" />
    </SideItem>
    <SideItem label="更多">
      <circle cx="9" cy="9" r="9" /><path d="M4 8h2v2H4zM8 8h2v2H8zM12 8h2v2h-2z" fill="#fff" />
    </SideItem>
    <IconButton label="红包" className="h-[32px] w-[32px]">
      <svg viewBox="0 0 32 32" className="h-8 w-8">
        <path d="M2 13l6 2v5l-4-1zM30 13l-6 2v5l4-1z" fill="#f5a81c" />
        <rect x="6" y="3" width="20" height="27" rx="3" fill="#e8203c" /><path d="M6 6a3 3 0 0 1 3-3h14a3 3 0 0 1 3 3v9q-10 8-20 0z" fill="#f23a50" />
        <circle cx="16" cy="14" r="4.500" fill="#ffc93c" /><path d="m27.500 1 4 4M31.500 1l-4 4" stroke="#bbb" strokeWidth=".7" />
      </svg>
    </IconButton>
  </aside>
);

const StatusBar = () => (
  <footer className="flex h-[25px] shrink-0 items-center rounded-b-lg border-t border-[#444] bg-[#151515] pl-[8px] text-[13px] whitespace-nowrap text-white">
    <span>就绪</span>
    <span className="ml-[16px]">快速填充更改的单元格: 14</span>
    <div className="flex flex-1 items-center justify-end">
      <span>平均值: 2057/7/4</span>
      <span className="ml-[17px]">计数: 15</span>
      <span className="ml-[17px]">求和: 3317/8/15</span>
      <IconButton label="普通" className="ml-[21px] h-[23px] w-[43px] bg-[#262626]">
        <svg viewBox="0 0 16 15" className="h-[15px] w-4" fill="none" stroke="#fff" strokeWidth="1.200"><path d="M1 1h14v13H1zM1 5.300h14M1 9.600h14M5.500 1v13M10.500 1v13" /></svg>
      </IconButton>
      <IconButton label="页面布局" className="h-[23px] w-[44px]">
        <svg viewBox="0 0 16 15" className="h-[15px] w-4" fill="none" stroke="#fff" strokeWidth="1.200"><path d="M1 1h14v13H1zM4 3.500h8v8H4zM5.500 6h5M5.500 8.500h5" /></svg>
      </IconButton>
      <IconButton label="分页预览" className="h-[23px] w-[44px]">
        <svg viewBox="0 0 16 15" className="h-[15px] w-4" fill="none" stroke="#fff" strokeWidth="1.200"><path d="M1 1h14v13H1zM5.500 1v8H1M10.500 1v8H5.500M8 1v8M10.500 9H15" /></svg>
      </IconButton>
      <button type="button" className="ml-[6px] text-[#888]">−</button>
      <input type="range" aria-label="缩放" className="mx-[8px] h-px w-[107px] appearance-none bg-[#999] [&::-webkit-slider-thumb]:h-[13px] [&::-webkit-slider-thumb]:w-[5px] [&::-webkit-slider-thumb]:appearance-none [&::-webkit-slider-thumb]:bg-[#ccc]" />
      <button type="button" className="text-[#888]">+</button>
      <span className="mr-[21px] ml-[15px]">100%</span>
    </div>
  </footer>
);

/* ---------- taskbar ---------- */

const TaskButton = ({ label, running, active, children }: { label: string; running?: boolean; active?: boolean; children: ReactNode }) => (
  <button type="button" aria-label={label} className={`flex h-full w-[54px] flex-col items-center justify-between rounded pt-[8px] ${active ? 'bg-white/20' : ''}`}>
    <svg viewBox="0 0 28 28" className="h-[27px] w-[27px]">{children}</svg>
    <span className={`h-[3px] rounded-full ${running ? 'bg-[#60b8f0]' : ''} ${active ? 'w-[42px]' : 'w-[34px]'}`} />
  </button>
);

const Taskbar = () => (
  <div className="flex h-[44px] shrink-0 bg-[linear-gradient(90deg,#1d222b_0%,#1c2230_22%,#121f5e_27%,#121f5e_38%,#1b1f4a_48%,#121f5e_56%,#121f5e_63%,#24242a_68%,#202226_76%,#15202f_85%,#1b222c_100%)]">
    <div className="flex-1" />
    <div className="mr-[5px] flex">
      <TaskButton label="开始">
        <path d="M1 1h12.500v12.500H1zM14.500 1H27v12.500H14.500zM1 14.500h12.500V27H1zM14.500 14.500H27V27H14.500z" fill="#62b4ee" />
      </TaskButton>
      <TaskButton label="搜索">
        <circle cx="16" cy="12" r="9.500" fill="#4d4e78" stroke="#eef0f8" strokeWidth="2.600" /><path d="m9.500 19-7 7.500" stroke="#eef0f8" strokeWidth="3.400" strokeLinecap="round" />
      </TaskButton>
      <TaskButton label="任务视图">
        <rect x="8" y="1" width="19" height="18" rx="1" fill="#f2f2f4" /><rect x="1" y="8" width="19" height="19" rx="1" fill="#8c8e90" fillOpacity=".85" />
      </TaskButton>
      <TaskButton label="小组件">
        <rect x="1" y="1" width="26" height="26" rx="1" fill="#1177b8" /><path d="M3.500 3.500h9v21h-9z" fill="#fff" /><path d="M15 3.500h10v12H15z" fill="#6fe4f4" /><path d="M15 15.500h10v9H15z" fill="#2fb0d8" />
      </TaskButton>
      <TaskButton label="浏览器">
        <circle cx="14" cy="14" r="13" fill="#2ab4ec" />
        <path d="M8.500 10.500c2-4.500 11-4.500 11-.5 0 3.500-4 3.500-7.500 4-5 .8-5.500 6.500 0 6.500 4.500 0 8-1.500 9-4M10.500 11.500h6" fill="none" stroke="#fff" strokeWidth="2.800" strokeLinecap="round" />
      </TaskButton>
      <TaskButton label="Chrome">
        <circle cx="14" cy="14" r="13" fill="#fbc116" /><path d="M14 14 2.700 7.500a13 13 0 0 1 22.600 0z" fill="#d8463a" /><path d="M14 14 2.700 7.500A13 13 0 0 0 13 27l5-9z" fill="#2f9a50" />
        <circle cx="14" cy="14" r="6" fill="#fff" /><circle cx="14" cy="14" r="4.700" fill="#4a86ec" />
      </TaskButton>
      <TaskButton label="钉钉">
        <circle cx="14" cy="14" r="13" fill="#2d94e4" /><path d="M6.500 6.500q8 1 14.500 4.500c1 3-1 6-3 8l2 .5-3 .5 1.500 3c-3-1-4.500-2.500-5-4.500l-1-1.500 1-.5c-3-.5-4.500-2-5-3.500l2-.3C8.500 11 7 9.500 6.500 6.500z" fill="#fff" />
      </TaskButton>
      <TaskButton label="QQ浏览器" running>
        <circle cx="13.500" cy="13" r="10" fill="none" stroke="#2392f0" strokeWidth="5" /><path d="M14 26.500a4 4 0 0 1 .5-8 5 5 0 0 1 9-.5 4.300 4.300 0 0 1 1 8.500z" fill="#fff" />
      </TaskButton>
      <TaskButton label="QQ">
        <path d="M14 1c5 0 7 4 7 8l3 8-2 2-1-1c0 6-3 8-7 8s-7-2-7-8l-1 1-2-2 3-8c0-4 2-8 7-8z" fill="#0b0b10" /><ellipse cx="14" cy="19.500" rx="5.500" ry="6" fill="#fff" />
        <path d="M6 12q8 4 16 0l1 3q-6 3-11 2.500v4H9V17l-4-2z" fill="#e4242c" /><ellipse cx="11.800" cy="6.500" rx="1.500" ry="2.200" fill="#fff" /><ellipse cx="16.200" cy="6.500" rx="1.500" ry="2.200" fill="#fff" /><path d="M10 10.500h8L14 12.500zM7 25h6v2.500H7zM15 25h6v2.500h-6z" fill="#f5b020" />
      </TaskButton>
      <TaskButton label="文件资源管理器" running>
        <path d="M1 4a2 2 0 0 1 2-2h7l3 3h12a2 2 0 0 1 2 2v4H1z" fill="#d99a1c" /><path d="M1 8h9l3-2h14v19a1.500 1.500 0 0 1-1.500 1.500h-23A1.500 1.500 0 0 1 1 25z" fill="#fbd25c" /><path d="M6 20q0-2 2-2h12q2 0 2 2v6.500H6z" fill="#1571c4" /><path d="M10 22h8" stroke="#0a4a8c" strokeWidth="1.500" />
      </TaskButton>
      <TaskButton label="记事本" running>
        <rect x="4" y="2" width="20" height="25" rx="2" fill="#5cc4e0" /><path d="M4 24h20v3H4z" fill="#e0d4c0" /><path d="M7 1v3M10.500 1v3M14 1v3M17.500 1v3M21 1v3" stroke="#1a6478" strokeWidth="1.500" /><path d="M8 9h12M8 13.500h12M8 18h12" stroke="#15708c" strokeWidth="1.800" />
      </TaskButton>
      <TaskButton label="Excel" running active>
        <ExcelIcon className="h-[28px] w-[28px]" />
      </TaskButton>
    </div>
    <div className="flex flex-1 items-center justify-end text-white">
      <svg viewBox="0 0 12 7" className="mr-[14px] w-[12px]" fill="none" stroke="#fff" strokeWidth="1.200"><path d="m1 6 5-5 5 5" /></svg>
      <svg viewBox="0 0 18 14" className="mr-[9px] h-[14px] w-[18px]" fill="none" stroke="#fff" strokeWidth="1.200">
        <path d="M7 3h8.500v8.500H4V9M16 6h1.500v3H16" /><path d="M7 5h6.500v4.500H6.500z" fill="#fff" /><path d="M1 3h5v2.500L5 7H2L1 5.500zM2.300 3V.5M4.700 3V.5M3.500 7v4" fill="#fff" />
      </svg>
      <svg viewBox="0 0 18 13" className="mr-[9px] h-[13px] w-[18px]" fill="none" stroke="#fff" strokeWidth="1.200"><path d="M.8 4.500a11.500 11.500 0 0 1 16.400 0M3.300 7a8 8 0 0 1 11.400 0M5.800 9.500a4.500 4.500 0 0 1 6.400 0" /><circle cx="9" cy="11.300" r="1" fill="#fff" /></svg>
      <svg viewBox="0 0 17 14" className="mr-[8px] h-[14px] w-[17px]" fill="none" stroke="#fff" strokeWidth="1.200"><path d="M.8 5h2.700L7.500 1.500v11L3.500 9H.8zM10 5q1.500 2 0 4M12 3q3 4 0 8M14 1.500q4.500 5.500 0 11" /></svg>
      <span className="mr-[14px] text-[17px]">中</span>
      <svg viewBox="0 0 18 18" className="mr-[19px] h-[18px] w-[18px]"><rect x="1" y="1" width="16" height="16" rx="3" fill="#ee4f1c" transform="rotate(-6 9 9)" /><path d="M13.500 5.500C11 3.500 5 4 5 6.800c0 2.700 8.500 1.500 8.500 4.200 0 2.800-6 3-9 1" fill="none" stroke="#fff" strokeWidth="2.400" /></svg>
      <div className="mr-[20px] text-center text-[13px] leading-[20px]">22:48<br />2022/1/16</div>
      <svg viewBox="0 0 17 17" className="mr-[17px] h-[17px] w-[17px]" fill="none" stroke="#fff" strokeWidth="1.200"><path d="M1.500 1h14v12h-5L8.500 15.800 6.500 13h-5z" /></svg>
    </div>
  </div>
);

const Watermark = () => (
  <svg viewBox="0 0 300 150" className="pointer-events-none absolute right-[80px] bottom-[30px] h-[150px] w-[300px]" fill="#fff" fillOpacity=".82" stroke="#bbb" strokeOpacity=".6">
    <ellipse cx="117" cy="44" rx="11" ry="14.500" /><ellipse cx="137" cy="24" rx="11" ry="14.500" /><ellipse cx="162" cy="26" rx="11" ry="14.500" /><ellipse cx="178" cy="50" rx="11" ry="14" />
    <path d="M147 46c13 0 17 14 27 23 12 11 12 29-4 30-8 1-14-2-23-2s-17 3-25 2c-13-2-14-18-3-28 11-9 15-25 28-25z" />
    <text x="6" y="97" fontSize="64" fontWeight="700" className="font-['Liberation_Sans',sans-serif]">Bai</text>
    <text x="123" y="89" fontSize="38" fontWeight="700" fill="#d8d8d8" className="font-['Liberation_Sans',sans-serif]">du</text>
    <text x="187" y="93" fontSize="49" fontWeight="700" className="font-['Noto_Sans_CJK_SC',sans-serif]">经验</text>
    <text x="10" y="136" fontSize="33" strokeWidth=".6" className="font-['Noto_Sans',sans-serif]">jingyan.baidu.com</text>
  </svg>
);

const App = () => {
  return (
    <div className="relative flex h-screen flex-col overflow-hidden bg-[linear-gradient(90deg,#020b1f_0%,#02102a_20%,#0a2aa0_24%,#0638c0_40%,#041a78_50%,#020618_62%,#020618_66%,#03143c_80%,#020b1f_100%)] font-['Open_Sans','Noto_Sans_CJK_SC',sans-serif]">
      <div className="mt-px mr-[8px] mb-[7px] ml-[7px] flex min-h-0 flex-1 flex-col overflow-hidden rounded-lg border border-[#777] bg-[#0a0a0a]">
        <TitleBar />
        <MenuBar />
        <Ribbon />
        <FormulaBar />
        <main className="flex min-h-0 flex-1">
          <div className="flex min-w-0 flex-1 flex-col">
            <div className="flex min-h-0 flex-1">
              <div className="relative min-w-0 flex-1 overflow-hidden">
                <div className="-mr-[16px]">
                  <SheetTable />
                </div>
                <SheetOverlay />
              </div>
              <div className="flex w-[20px] shrink-0 flex-col items-center bg-[#151515] py-[5px]">
                <svg viewBox="0 0 10 8" className="h-2 w-[10px]" fill="#999"><path d="M5 0l5 8H0z" /></svg>
                <span className="mt-[6px] mb-[34px] w-[9px] flex-1 rounded-full bg-[#999]" />
                <svg viewBox="0 0 10 8" className="h-2 w-[10px]" fill="#999"><path d="M0 0h10L5 8z" /></svg>
              </div>
            </div>
            <SheetTabs />
          </div>
          <SidePanel />
        </main>
        <StatusBar />
      </div>
      <Taskbar />
      <Watermark />
    </div>
  );
};

export default App;
